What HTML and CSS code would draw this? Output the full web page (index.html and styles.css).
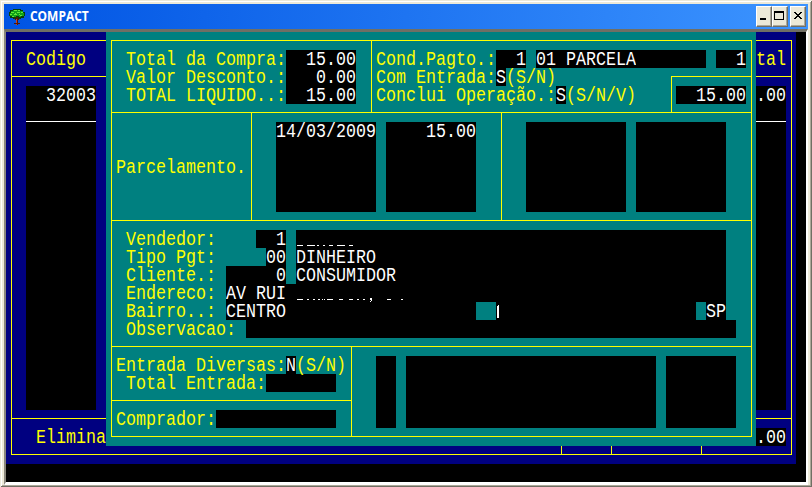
FILE: index.html
```
<!DOCTYPE html>
<html lang="pt-BR">
<head>
<meta charset="utf-8">
<title>COMPACT</title>
<link rel="stylesheet" href="styles.css">
</head>
<body>
<div class="window">
  <header class="titlebar">
    <svg class="tree" width="16" height="16" viewBox="0 0 16 16" shape-rendering="crispEdges">
      <path fill="#064006" d="M4 0h8v1h2v2h2v4h-1v2h-3v1H4V9H1V7H0V3h1V1h3z"/>
      <path fill="#10a018" d="M4 1h7v1h3v2h1v3h-3v1h-2V7H7v1H3V7H1V4h1V2h2z"/>
      <path fill="#60e838" d="M5 1h3v1H5zM9 1h2v1H9zM2 3h3v1H2zM8 3h3v1H8zM12 3h2v1h-2zM6 4h1v1H6zM5 5h3v1H5zM1 5h2v1H1zM10 5h1v1h-1zM11 6h2v1h-2zM3 7h2v1H3z"/>
      <path fill="#501808" d="M5 9h1v1h1V8h2v2h1V9h1v1h-1v1H9v3h2v1H9v1H7v-1H5v-1h2v-3H6v-1H5z"/>
      <path fill="#d04020" d="M7 10h1v4H7zM7 15h1v1H7z"/>
    </svg>
    <h1>COMPACT</h1>
    <div class="controls">
      <span class="btn"><svg width="14" height="19" shape-rendering="crispEdges"><path d="M3 11h6v2H3z"/></svg></span>
      <span class="btn"><svg width="14" height="19" shape-rendering="crispEdges"><path fill-rule="evenodd" d="M1 4h10v9H1zM2 6v6h8V6z"/></svg></span>
      <span class="btn close"><svg width="14" height="19" shape-rendering="crispEdges"><path d="M3 5h2v1h1v1h2V6h1V5h2v1h-1v1H9v1H8v1h1v1h1v1h1v1H9v-1H8v-1H6v1H5v1H3v-1h1v-1h1V9h1V8H5V7H4V6H3z"/></svg></span>
    </div>
  </header>
  <main class="screen">
    <div class="base">
      <div class="base-frame">
        <div class="base-head"><span class="t">Codigo</span><span class="t">tal</span></div>
        <div class="base-body">
          <div class="col w7"><div class="col-first"><span class="t w">32003</span></div></div>
          <div class="col w3"><div class="col-first"><span class="t w">.00</span></div></div>
        </div>
        <div class="base-foot">
          <span class="t">Elimina</span>
          <div class="foot-cells"><i class="w5"></i><i class="w9"></i><i class="w6"></i></div>
          <span class="f w3"><span class="t">.00</span></span>
        </div>
      </div>
    </div>

    <div class="dialog">
      <div class="frame">
        <section class="sec totals">
          <div class="totals-left">
            <div class="row"><span class="t">Total da Compra:</span><span class="f r w7"><span class="t">15.00</span></span></div>
            <div class="row"><span class="t">Valor Desconto.:</span><span class="f r w7"><span class="t">0.00</span></span></div>
            <div class="row"><span class="t">TOTAL LIQUIDO..:</span><span class="f r w7"><span class="t">15.00</span></span></div>
          </div>
          <div class="totals-right">
            <div class="row gap"><span class="row"><span class="t">Cond.Pagto.:</span><span class="f r w3"><span class="t">1</span></span></span><span class="f w17"><span class="t">01 PARCELA</span></span><span class="f r w3"><span class="t">1</span></span></div>
            <div class="split">
              <div>
                <div class="row"><span class="t">Com Entrada:</span><span class="f w1"><span class="t">S</span></span><span class="t">(S/N)</span></div>
                <div class="row"><span class="t">Conclui Operação.:</span><span class="f w1"><span class="t">S</span></span><span class="t">(S/N/V)</span></div>
              </div>
              <div class="corner"><span class="f r w7"><span class="t">15.00</span></span></div>
            </div>
          </div>
        </section>

        <section class="sec parcels">
          <div class="parcels-label"><span class="t">Parcelamento.</span></div>
          <div class="parcels-group ruled"><span class="f tall w10"><span class="t">14/03/2009</span></span><span class="f tall r w9"><span class="t">15.00</span></span></div>
          <div class="parcels-group"><span class="f tall w10"></span><span class="f tall w9"></span></div>
        </section>

        <section class="sec client">
          <div class="row"><span class="t w13">Vendedor:</span><span class="f r w3"><span class="t">1</span></span><span class="s"></span><span class="f w43"><svg width="60" height="18" shape-rendering="crispEdges" fill="#fff"><path d="M1 15h6v1H1zM11 15h8v1h-8zM21 15h2v1h-2zM27 15h2v1h-2zM33 15h4v1h-4zM41 15h8v1h-8zM53 15h4v1h-4z"/></svg></span></div>
          <div class="row"><span class="t w14">Tipo Pgt:</span><span class="f w2"><span class="t">00</span></span><span class="s"></span><span class="f w43"><span class="t">DINHEIRO</span></span></div>
          <div class="row"><span class="t w10">Cliente.:</span><span class="f r w6"><span class="t">0</span></span><span class="s"></span><span class="f w43"><span class="t">CONSUMIDOR</span></span></div>
          <div class="row"><span class="t w10">Endereco:</span><span class="f w50"><span class="t w7">AV RUI</span><svg width="110" height="18" shape-rendering="crispEdges" fill="#fff"><path d="M1 15h6v1H1zM11 15h2v1h-2zM17 15h2v1h-2zM22 15h2v1h-2zM26 15h1v1h-1zM28 15h1v1h-1zM31 15h6v1h-6zM43 15h4v1h-4zM53 15h4v1h-4zM61 15h2v1h-2zM67 15h2v1h-2zM74 14h2v3h-1v1h-1v-1h1v-1h-1zM91 15h4v1h-4zM105 15h2v1h-2z"/></svg></span></div>
          <div class="row"><span class="t w10">Bairro..:</span><span class="f w25"><span class="t">CENTRO</span></span><span class="s w2"></span><span class="f w20"><svg width="10" height="18" shape-rendering="crispEdges" fill="#fff"><path d="M2 3h1v13H1V4h1z"/></svg></span><span class="s"></span><span class="f w2"><span class="t">SP</span></span></div>
          <div class="row"><span class="t w12">Observacao:</span><span class="f w49"></span></div>
        </section>

        <section class="sec extras">
          <div class="extras-left">
            <div class="entries">
              <div class="row"><span class="t">Entrada Diversas:</span><span class="f w1"><span class="t">N</span></span><span class="t">(S/N)</span></div>
              <div class="row indent"><span class="t">Total Entrada:</span><span class="f w7"></span></div>
            </div>
            <div class="buyer"><div class="row"><span class="t">Comprador:</span><span class="f w12"></span></div></div>
          </div>
          <div class="extras-right"><span class="f w2"></span><span class="f w25"></span><span class="f w7"></span></div>
        </section>
      </div>
    </div>
  </main>
</div>
</body>
</html>
```
FILE: styles.css
```
* { box-sizing: border-box; }
body { margin: 0; width: 812px; height: 487px; overflow: hidden; background: #ece9d8; }

/* Window chrome */
.window {
  width: 812px; height: 487px; padding: 4px 4px 0;
  background: #ece9d8;
  box-shadow: inset 1px 1px #ece9d8, inset -1px -1px #716f64, inset 2px 2px #fff, inset -2px -2px #aca899;
}
.titlebar {
  display: flex; align-items: center; height: 25px; padding: 0 2px 0 5px;
  background: linear-gradient(90deg, #0054e3, #3c94ff);
}
.titlebar h1 {
  margin: 0 0 0 5px; color: #fff;
  font: bold 13.5px/25px "Open Sans", sans-serif;
  transform: scaleX(.885); transform-origin: left;
}
.controls { display: flex; margin-left: auto; }
.btn {
  width: 16px; height: 21px; background: #ece9d8;
  border: 1px solid; border-color: #fff #716f64 #716f64 #fff;
  box-shadow: inset -1px -1px #aca899;
}
.btn svg { display: block; }
.close { margin-left: 2px; }

/* Character screen: 10px by 18px cells */
.screen {
  position: relative; width: 804px; height: 456px; background: #000;
  border: solid; border-width: 3px 2px; border-color: #716f64 #fff #fff #8a877c;
}
.base { width: 790px; height: 432px; padding: 8px 4px 9px 5px; background: #000080; }
.base-frame { height: 415px; border: 1px solid #ff0; }
.base-head {
  display: flex; justify-content: space-between; height: 36px; padding: 9px 5px 0 14px;
  border-bottom: 1px solid #ff0;
}
.base-body {
  display: flex; justify-content: space-between; height: 342px; padding: 9px 5px 8px 14px;
  border-bottom: 1px solid #ff0;
}
.col { background: #000; }
.col-first { display: flex; justify-content: flex-end; height: 36px; border-bottom: 1px solid #fff; }
.base-foot { display: flex; justify-content: space-between; height: 35px; padding: 9px 5px 0 24px; }
.foot-cells { display: flex; height: 26px; margin-left: auto; margin-right: -5px; }
.foot-cells i { border-left: 1px solid #ff0; }
.base-foot .f { position: relative; }

.dialog {
  position: absolute; left: 100px; top: 0; width: 650px; height: 414px;
  padding: 8px 4px 9px 5px; background: #008080;
}
.frame { height: 397px; border: 1px solid #ff0; }
.sec { display: flex; border-bottom: 1px solid #ff0; }
.sec:last-child { border-bottom: 0; }
.row { display: flex; height: 18px; }
.gap { gap: 10px; }

/* Tall, narrow terminal lettering */
.t {
  display: block; flex: none; height: 14px; white-space: pre; color: #ff0;
  font: 16.664px/14px "Liberation Mono", monospace;
  transform: scaleY(1.26); transform-origin: 0 12px;
  position: relative; top: 4px;
}
.f { display: flex; flex: none; height: 18px; background: #000; }
.f .t, .t.w { color: #fff; }
.f svg { display: block; flex: none; }
.r { justify-content: flex-end; }
.s { width: 10px; flex: none; }

.totals { height: 72px; }
.totals-left { width: 260px; padding: 9px 0 0 14px; border-right: 1px solid #ff0; }
.totals-right { flex: 1; padding: 9px 0 0 4px; }
.split { display: flex; justify-content: space-between; height: 44px; }
.corner { width: 80px; margin-top: 8px; padding: 9px 0 0 4px; border: solid #ff0; border-width: 1px 0 0 1px; }

.parcels { height: 108px; }
.parcels-label { width: 140px; padding: 45px 0 0 4px; border-right: 1px solid #ff0; }
.parcels-group { display: flex; gap: 10px; width: 249px; padding: 9px 0 0 24px; }
.ruled { width: 250px; border-right: 1px solid #ff0; }
.tall { height: 90px; }

.client { height: 126px; flex-direction: column; padding: 9px 0 0 14px; }

.extras { height: 89px; }
.extras-left { width: 240px; border-right: 1px solid #ff0; }
.entries { height: 54px; padding: 9px 0 0 4px; border-bottom: 1px solid #ff0; }
.indent { padding-left: 10px; }
.buyer { padding: 9px 0 0 4px; }
.extras-right { display: flex; gap: 10px; padding: 9px 0 0 24px; }
.extras-right .f { height: 72px; }

.w1 { width: 10px; } .w2 { width: 20px; } .w3 { width: 30px; } .w5 { width: 50px; }
.w6 { width: 60px; } .w7 { width: 70px; } .w9 { width: 90px; } .w10 { width: 100px; }
.w12 { width: 120px; } .w13 { width: 130px; } .w14 { width: 140px; } .w17 { width: 170px; }
.w20 { width: 200px; } .w25 { width: 250px; } .w43 { width: 430px; } .w49 { width: 490px; } .w50 { width: 500px; }
```
